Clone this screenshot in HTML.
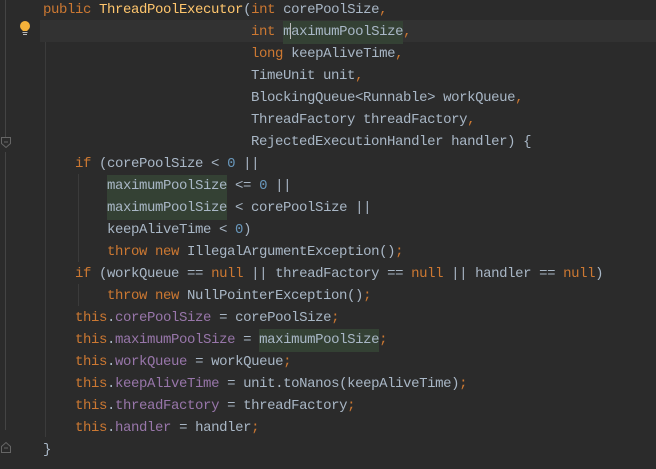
<!DOCTYPE html>
<html><head><style>
html,body{margin:0;padding:0;background:#2b2b2b;width:656px;height:469px;overflow:hidden;position:relative}
pre{position:absolute;left:43px;top:-1px;margin:0;font-family:"Liberation Mono",monospace;font-size:14px;letter-spacing:-0.4px;line-height:22px;color:#a9b7c6;white-space:pre}
.k{color:#cc7832}.f{color:#9876aa}.n{color:#6897bb}.m{color:#ffc66d}
.h{background:#344134;padding:3px 0 4px}
.cur{position:absolute;left:40px;top:20px;width:616px;height:22px;background:#323232}
.g{position:absolute;background:#3b3b3b;width:1px}
</style></head><body>
<div class="cur"></div>
<div class="g" style="left:5px;top:0;height:140px;background:#444"></div>
<div class="g" style="left:5px;top:152px;height:278px;background:#444"></div>
<div class="g" style="left:45px;top:42px;height:395px"></div>
<div class="g" style="left:78px;top:174px;height:88px"></div>
<div class="g" style="left:78px;top:284px;height:22px"></div>
<svg style="position:absolute;left:0;top:136px" width="12" height="14"><path d="M1.5 1.5h9v6l-4.5 4-4.5-4z" fill="#2b2b2b" stroke="#666"/><path d="M4 6h4" stroke="#666"/></svg>
<svg style="position:absolute;left:0;top:440px" width="12" height="14"><path d="M1.5 12.5h9v-6l-4.5-4-4.5 4z" fill="#2b2b2b" stroke="#666"/><path d="M4 8h4" stroke="#666"/></svg>
<svg style="position:absolute;left:18px;top:20px" width="14" height="16"><circle cx="7" cy="6" r="5" fill="#f4b13a"/><rect x="4.5" y="9" width="5" height="2" fill="#f4b13a"/><rect x="4.5" y="12" width="5" height="1" fill="#bbb"/><rect x="5" y="14" width="4" height="1" fill="#bbb"/></svg>
<pre><span class="k">public</span> <span class="m">ThreadPoolExecutor</span>(<span class="k">int</span> corePoolSize<span class="k">,</span>
                          <span class="k">int</span> <span class="h">maximumPoolSize</span><span class="k">,</span>
                          <span class="k">long</span> keepAliveTime<span class="k">,</span>
                          TimeUnit unit<span class="k">,</span>
                          BlockingQueue&lt;Runnable&gt; workQueue<span class="k">,</span>
                          ThreadFactory threadFactory<span class="k">,</span>
                          RejectedExecutionHandler handler) {
    <span class="k">if</span> (corePoolSize &lt; <span class="n">0</span> ||
        <span class="h">maximumPoolSize</span> &lt;= <span class="n">0</span> ||
        <span class="h">maximumPoolSize</span> &lt; corePoolSize ||
        keepAliveTime &lt; <span class="n">0</span>)
        <span class="k">throw new</span> IllegalArgumentException()<span class="k">;</span>
    <span class="k">if</span> (workQueue == <span class="k">null</span> || threadFactory == <span class="k">null</span> || handler == <span class="k">null</span>)
        <span class="k">throw new</span> NullPointerException()<span class="k">;</span>
    <span class="k">this</span>.<span class="f">corePoolSize</span> = corePoolSize<span class="k">;</span>
    <span class="k">this</span>.<span class="f">maximumPoolSize</span> = <span class="h">maximumPoolSize</span><span class="k">;</span>
    <span class="k">this</span>.<span class="f">workQueue</span> = workQueue<span class="k">;</span>
    <span class="k">this</span>.<span class="f">keepAliveTime</span> = unit.toNanos(keepAliveTime)<span class="k">;</span>
    <span class="k">this</span>.<span class="f">threadFactory</span> = threadFactory<span class="k">;</span>
    <span class="k">this</span>.<span class="f">handler</span> = handler<span class="k">;</span>
}</pre>
<div style="position:absolute;left:290px;top:23px;width:1px;height:16px;background:#bbb"></div>
</body></html>
